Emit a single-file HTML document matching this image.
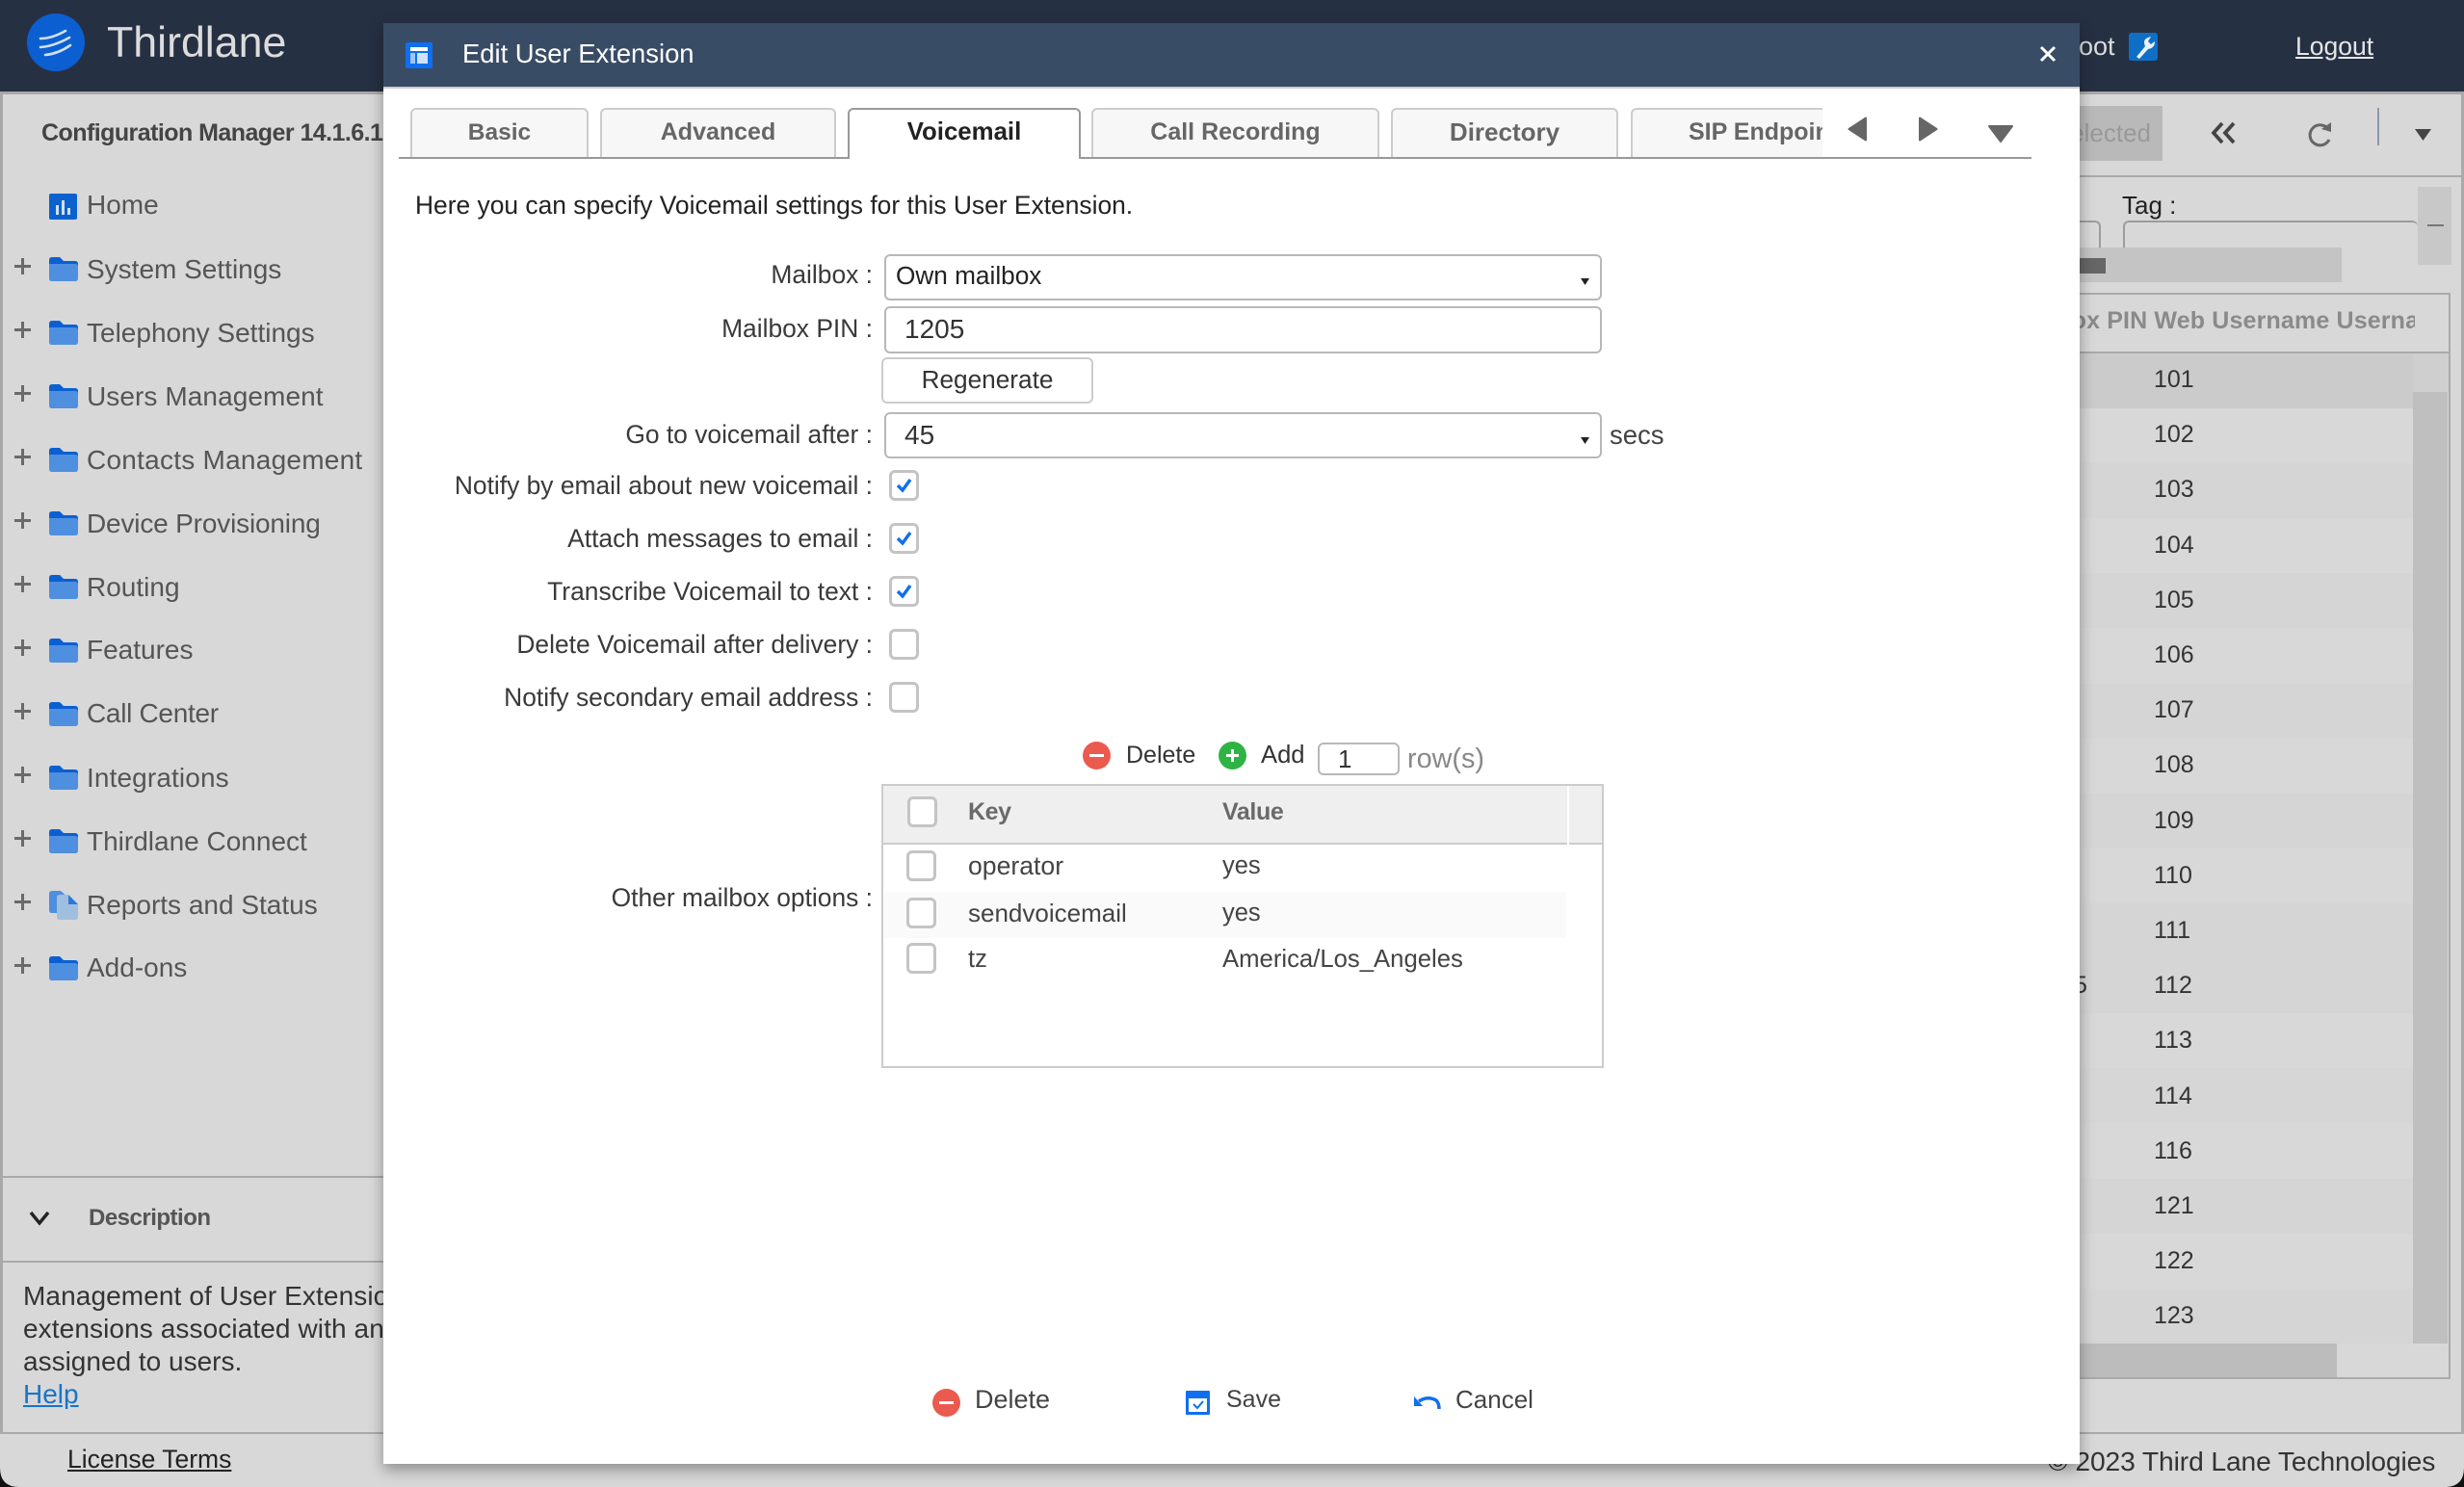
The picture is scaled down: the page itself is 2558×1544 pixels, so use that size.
<!DOCTYPE html>
<html lang="en"><head><meta charset="utf-8"><title>Edit User Extension</title>
<style>
html,body{margin:0;padding:0;width:2558px;height:1544px;overflow:hidden;background:#d8d8d8}
body{position:relative;font-family:"Liberation Sans",sans-serif;color:#333}
.a{position:absolute;display:block}
.t{position:absolute;white-space:nowrap;line-height:40px;height:40px}
.n{font-size:28px;color:#555;left:90px}
.p{left:15px;width:17px;height:3px;background:#6a6a6a}
.p:after{content:"";position:absolute;left:7px;top:-7px;width:3px;height:17px;background:#6a6a6a}
.num{left:2236px;font-size:25px;color:#333}
.lb{right:1652px;font-size:26.4px;color:#3a3a3a;text-align:right}
.tab{position:absolute;top:112px;height:51px;box-sizing:border-box;background:#f7f7f7;border:2px solid #ccc;border-bottom:0;border-radius:6px 6px 0 0;text-align:center;font-size:25px;font-weight:bold;color:#666;line-height:47px;overflow:hidden;white-space:nowrap}
.ip{position:absolute;box-sizing:border-box;background:#fff;border:2px solid #b8b8b8;border-radius:6px}
.cb{position:absolute;box-sizing:border-box;width:31px;height:32px;background:#fff;border:3px solid #c4c4c4;border-radius:6px}
.row{position:absolute;left:2159px;width:346px;height:57px}
</style></head><body>
<!-- header -->
<div class="a" style="left:0;top:0;width:2558px;height:95px;background:#263043"></div>
<div class="a" style="left:0;top:95px;width:2558px;height:3px;background:#a8a8a8"></div>
<svg class="a" style="left:27px;top:14px" width="62" height="60" viewBox="0 0 62 60"><ellipse cx="31" cy="30" rx="30" ry="30" fill="#0b5fd1"/><g fill="none" stroke="#cfe0f6" stroke-width="2.6" stroke-linecap="round"><path d="M15 26Q27 26 41 18"/><path d="M15 35Q29 34 45 25"/><path d="M20 43Q33 42 46 33"/></g></svg>
<div class="t" style="left:111px;top:25px;font-size:44.7px;color:#dcdcdc">Thirdlane</div>
<div class="t" style="left:2159px;top:28px;width:39px;overflow:hidden;font-size:27px;color:#dcdcdc"><span style="margin-left:-1px">oot</span></div>
<svg class="a" style="left:2210px;top:34px" width="30" height="29" viewBox="0 0 30 29"><rect width="30" height="29" rx="3" fill="#0f6fc6"/><path d="M8 25L17 14Q14 7 20 5L23 4L20 9L23 12L27 9Q27 16 20 17L11 27Z" fill="#e8f1fa"/></svg>
<div class="t" style="left:2383px;top:28px;font-size:26.5px;color:#e6e6e6;text-decoration:underline">Logout</div>

<!-- left panel -->
<div class="a" style="left:0;top:98px;width:3px;height:1390px;background:#a8a8a8"></div>
<div class="t" style="left:43px;top:118px;font-size:25px;font-weight:bold;color:#444;letter-spacing:-.55px">Configuration Manager 14.1.6.1</div>
<svg class="a" style="left:51px;top:201px" width="29" height="27" viewBox="0 0 29 27"><rect width="29" height="27" rx="2" fill="#0b62cf"/><path d="M7 12h3v10H7zM13 7h3v15h-3zM19 15h3v7h-3z" fill="#cfe0f6"/></svg>
<div class="t n" style="top:193px">Home</div>

<div class="a p" style="top:275px"></div><svg class="a" style="left:51px;top:267px" width="30" height="25" viewBox="0 0 30 25"><path d="M0 3Q0 0 3 0H11L15 4H27Q30 4 30 7V10H0Z" fill="#0b5fd1"/><path d="M0 7H27Q30 7 30 10V22Q30 25 27 25H3Q0 25 0 22Z" fill="#4f8fdf"/></svg><div class="t n" style="top:260px">System Settings</div>
<div class="a p" style="top:341px"></div><svg class="a" style="left:51px;top:333px" width="30" height="25" viewBox="0 0 30 25"><path d="M0 3Q0 0 3 0H11L15 4H27Q30 4 30 7V10H0Z" fill="#0b5fd1"/><path d="M0 7H27Q30 7 30 10V22Q30 25 27 25H3Q0 25 0 22Z" fill="#4f8fdf"/></svg><div class="t n" style="top:326px">Telephony Settings</div>
<div class="a p" style="top:407px"></div><svg class="a" style="left:51px;top:399px" width="30" height="25" viewBox="0 0 30 25"><path d="M0 3Q0 0 3 0H11L15 4H27Q30 4 30 7V10H0Z" fill="#0b5fd1"/><path d="M0 7H27Q30 7 30 10V22Q30 25 27 25H3Q0 25 0 22Z" fill="#4f8fdf"/></svg><div class="t n" style="top:392px;letter-spacing:.08px">Users Management</div>
<div class="a p" style="top:473px"></div><svg class="a" style="left:51px;top:465px" width="30" height="25" viewBox="0 0 30 25"><path d="M0 3Q0 0 3 0H11L15 4H27Q30 4 30 7V10H0Z" fill="#0b5fd1"/><path d="M0 7H27Q30 7 30 10V22Q30 25 27 25H3Q0 25 0 22Z" fill="#4f8fdf"/></svg><div class="t n" style="top:458px;letter-spacing:.25px">Contacts Management</div>
<div class="a p" style="top:539px"></div><svg class="a" style="left:51px;top:531px" width="30" height="25" viewBox="0 0 30 25"><path d="M0 3Q0 0 3 0H11L15 4H27Q30 4 30 7V10H0Z" fill="#0b5fd1"/><path d="M0 7H27Q30 7 30 10V22Q30 25 27 25H3Q0 25 0 22Z" fill="#4f8fdf"/></svg><div class="t n" style="top:524px;letter-spacing:-.17px">Device Provisioning</div>
<div class="a p" style="top:605px"></div><svg class="a" style="left:51px;top:597px" width="30" height="25" viewBox="0 0 30 25"><path d="M0 3Q0 0 3 0H11L15 4H27Q30 4 30 7V10H0Z" fill="#0b5fd1"/><path d="M0 7H27Q30 7 30 10V22Q30 25 27 25H3Q0 25 0 22Z" fill="#4f8fdf"/></svg><div class="t n" style="top:590px">Routing</div>
<div class="a p" style="top:671px"></div><svg class="a" style="left:51px;top:663px" width="30" height="25" viewBox="0 0 30 25"><path d="M0 3Q0 0 3 0H11L15 4H27Q30 4 30 7V10H0Z" fill="#0b5fd1"/><path d="M0 7H27Q30 7 30 10V22Q30 25 27 25H3Q0 25 0 22Z" fill="#4f8fdf"/></svg><div class="t n" style="top:655px">Features</div>
<div class="a p" style="top:737px"></div><svg class="a" style="left:51px;top:729px" width="30" height="25" viewBox="0 0 30 25"><path d="M0 3Q0 0 3 0H11L15 4H27Q30 4 30 7V10H0Z" fill="#0b5fd1"/><path d="M0 7H27Q30 7 30 10V22Q30 25 27 25H3Q0 25 0 22Z" fill="#4f8fdf"/></svg><div class="t n" style="top:721px;letter-spacing:-.3px">Call Center</div>
<div class="a p" style="top:803px"></div><svg class="a" style="left:51px;top:795px" width="30" height="25" viewBox="0 0 30 25"><path d="M0 3Q0 0 3 0H11L15 4H27Q30 4 30 7V10H0Z" fill="#0b5fd1"/><path d="M0 7H27Q30 7 30 10V22Q30 25 27 25H3Q0 25 0 22Z" fill="#4f8fdf"/></svg><div class="t n" style="top:788px;letter-spacing:.12px">Integrations</div>
<div class="a p" style="top:869px"></div><svg class="a" style="left:51px;top:861px" width="30" height="25" viewBox="0 0 30 25"><path d="M0 3Q0 0 3 0H11L15 4H27Q30 4 30 7V10H0Z" fill="#0b5fd1"/><path d="M0 7H27Q30 7 30 10V22Q30 25 27 25H3Q0 25 0 22Z" fill="#4f8fdf"/></svg><div class="t n" style="top:854px">Thirdlane Connect</div>
<div class="a p" style="top:935px"></div><svg class="a" style="left:50px;top:924px" width="32" height="32" viewBox="0 0 32 32"><path d="M1 4Q1 1 4 1H13L21 8V24H4Q1 24 1 21Z" fill="#4f8fdf"/><path d="M9 8Q9 5 12 5H21L31 15V28Q31 31 28 31H12Q9 31 9 28Z" fill="#a0bfdf"/><path d="M21 5L31 15H21Z" fill="#2b78dc"/></svg><div class="t n" style="top:920px">Reports and Status</div>
<div class="a p" style="top:1001px"></div><svg class="a" style="left:51px;top:993px" width="30" height="25" viewBox="0 0 30 25"><path d="M0 3Q0 0 3 0H11L15 4H27Q30 4 30 7V10H0Z" fill="#0b5fd1"/><path d="M0 7H27Q30 7 30 10V22Q30 25 27 25H3Q0 25 0 22Z" fill="#4f8fdf"/></svg><div class="t n" style="top:985px">Add-ons</div>

<div class="a" style="left:0;top:1221px;width:400px;height:2px;background:#aaa"></div>
<svg class="a" style="left:30px;top:1257px" width="22" height="16" viewBox="0 0 22 16"><path d="M2 2L11 13L20 2" fill="none" stroke="#222" stroke-width="3.4"/></svg>
<div class="t" style="left:92px;top:1245px;font-size:24px;font-weight:bold;color:#555;letter-spacing:-.5px">Description</div>
<div class="a" style="left:0;top:1309px;width:400px;height:2px;background:#aaa"></div>
<div class="t" style="left:24px;top:1326px;font-size:28px;color:#333;letter-spacing:.1px">Management of User Extensions</div>
<div class="t" style="left:24px;top:1360px;font-size:28px;color:#333;letter-spacing:.1px">extensions associated with an</div>
<div class="t" style="left:24px;top:1394px;font-size:28px;color:#333">assigned to users.</div>
<div class="t" style="left:24px;top:1428px;font-size:28px;color:#1a74c8;text-decoration:underline">Help</div>
<div class="a" style="left:0;top:1487px;width:2558px;height:2px;background:#aaa"></div>
<div class="t" style="left:70px;top:1495px;font-size:26.5px;color:#222;text-decoration:underline">License Terms</div>
<div class="t" style="left:2126px;top:1497px;font-size:28.2px;color:#333;letter-spacing:-.1px">© 2023 Third Lane Technologies</div>
<svg class="a" style="left:0;top:1524px" width="20" height="20"><path d="M0 0Q0 20 20 20H0Z" fill="#111"/></svg>
<svg class="a" style="left:2538px;top:1524px" width="20" height="20"><path d="M20 0Q20 20 0 20H20Z" fill="#111"/></svg>

<!-- right side content -->
<div class="a" style="left:2555px;top:98px;width:3px;height:1390px;background:#aaa"></div>
<div class="a" style="left:2100px;top:110px;width:145px;height:57px;background:#b9b9b9"></div>
<div class="t" style="left:2120px;top:118px;font-size:26px;color:#999;width:113px;text-align:right">Selected</div>
<svg class="a" style="left:2295px;top:126px" width="28" height="24" viewBox="0 0 28 24"><path d="M12 2L3 12L12 22M24 2L15 12L24 22" fill="none" stroke="#444" stroke-width="3.8"/></svg>
<svg class="a" style="left:2396px;top:124px" width="26" height="30" viewBox="0 0 26 30"><path d="M21 10A10.5 10.5 0 1 0 22 21" fill="none" stroke="#666" stroke-width="3"/><path d="M14 10L24 3V13Z" fill="#666"/></svg>
<div class="a" style="left:2468px;top:112px;width:2px;height:39px;background:#8d97a8"></div>
<svg class="a" style="left:2507px;top:133px" width="17" height="13"><path d="M0 1H17L8.500 13Z" fill="#444"/></svg>
<div class="a" style="left:2100px;top:182px;width:458px;height:2px;background:#aaa"></div>
<div class="t" style="left:2203px;top:193px;font-size:26px;color:#222">Tag :</div>
<div class="a" style="left:2100px;top:229px;width:81px;height:28px;box-sizing:border-box;border:2px solid #9c9c9c;border-bottom:0;border-radius:6px 6px 0 0"></div>
<div class="a" style="left:2204px;top:229px;width:306px;height:28px;box-sizing:border-box;border:2px solid #9c9c9c;border-bottom:0;border-right:0;border-radius:6px 6px 0 0"></div>
<div class="a" style="left:2510px;top:194px;width:35px;height:81px;background:#c8c8c8"></div>
<div class="a" style="left:2520px;top:233px;width:17px;height:2px;background:#777"></div>
<div class="a" style="left:2100px;top:257px;width:331px;height:36px;background:#c4c4c4"></div>
<div class="a" style="left:2100px;top:268px;width:86px;height:16px;background:#666"></div>

<div class="a" style="left:2100px;top:304px;width:444px;height:2px;background:#aaa"></div>
<div class="a" style="left:2542px;top:304px;width:2px;height:1128px;background:#aaa"></div>
<div class="a" style="left:2100px;top:365px;width:442px;height:2px;background:#aaa"></div>
<div class="t" style="left:2086px;top:313px;width:421px;overflow:hidden;font-size:25px;font-weight:bold;color:#8a8a8a;letter-spacing:.15px">Mailbox PIN Web Username Username</div>

<div class="row" style="top:367px;background:#cbcbcb"></div>
<div class="row" style="top:481px;background:#d5d5d5"></div>
<div class="row" style="top:595px;background:#d5d5d5"></div>
<div class="row" style="top:710px;background:#d5d5d5"></div>
<div class="row" style="top:824px;background:#d5d5d5"></div>
<div class="row" style="top:938px;background:#d5d5d5"></div>
<div class="row" style="top:995px;background:#d5d5d5"></div>
<div class="row" style="top:1109px;background:#d6d6d6"></div>
<div class="row" style="top:1224px;background:#d5d5d5"></div>
<div class="row" style="top:1338px;background:#d5d5d5"></div>
<div class="t num" style="top:374px">101</div>
<div class="t num" style="top:431px">102</div>
<div class="t num" style="top:488px">103</div>
<div class="t num" style="top:546px">104</div>
<div class="t num" style="top:603px">105</div>
<div class="t num" style="top:660px">106</div>
<div class="t num" style="top:717px">107</div>
<div class="t num" style="top:774px">108</div>
<div class="t num" style="top:832px">109</div>
<div class="t num" style="top:889px">110</div>
<div class="t num" style="top:946px">111</div>
<div class="t num" style="top:1003px">112</div>
<div class="t num" style="top:1060px">113</div>
<div class="t num" style="top:1118px">114</div>
<div class="t num" style="top:1175px">116</div>
<div class="t num" style="top:1232px">121</div>
<div class="t num" style="top:1289px">122</div>
<div class="t num" style="top:1346px">123</div>
<div class="t" style="left:2153px;top:1003px;font-size:25px;color:#333">5</div>
<div class="a" style="left:2505px;top:367px;width:37px;height:40px;background:#cfcfcf"></div>
<div class="a" style="left:2505px;top:407px;width:36px;height:988px;background:#bfbfbf"></div>
<div class="a" style="left:2100px;top:1395px;width:326px;height:35px;background:#bcbcbc"></div>
<div class="a" style="left:2100px;top:1430px;width:444px;height:2px;background:#aaa"></div>

<!-- modal -->
<div class="a" style="left:398px;top:24px;width:1761px;height:1496px;background:#fff;box-shadow:0 6px 14px rgba(0,0,0,.35)"></div>
<div class="a" style="left:398px;top:24px;width:1761px;height:66px;background:#394c66"></div>
<div class="a" style="left:398px;top:90px;width:1761px;height:2px;background:#ccc"></div>
<svg class="a" style="left:421px;top:44px" width="28" height="27" viewBox="0 0 28 27"><rect width="28" height="27" rx="2" fill="#0f6ff0"/><rect x="5" y="5" width="18" height="4" fill="#fff"/><rect x="5" y="11" width="5" height="11" fill="#9fc4f7"/><rect x="12" y="11" width="11" height="11" fill="#cfe2fb"/></svg>
<div class="t" style="left:480px;top:36px;font-size:27.4px;color:#fff">Edit User Extension</div>
<svg class="a" style="left:2117px;top:47px" width="18" height="18"><path d="M2 2L16 16M16 2L2 16" stroke="#fff" stroke-width="3" fill="none"/></svg>

<div class="tab" style="left:426px;width:185px;font-size:24.5px">Basic</div>
<div class="tab" style="left:623px;width:245px">Advanced</div>
<div class="a" style="left:414px;top:163px;width:1695px;height:2px;background:#999"></div>
<div class="tab" style="left:880px;width:242px;height:53px;background:#fff;border-color:#999;color:#222;font-size:25.8px">Voicemail</div>
<div class="tab" style="left:1133px;width:299px">Call Recording</div>
<div class="tab" style="left:1444px;width:236px;font-size:26px">Directory</div>
<div class="tab" style="left:1693px;width:199px;border-right:0;border-radius:6px 0 0 0;text-align:left;padding-left:58px">SIP Endpoint</div>
<svg class="a" style="left:1918px;top:120px" width="22" height="28"><path d="M1.500 14L19 2.500V25.500Z" fill="#666" stroke="#666" stroke-width="2" stroke-linejoin="round"/></svg>
<svg class="a" style="left:1990px;top:120px" width="22" height="28"><path d="M20.500 14L3 2.500V25.500Z" fill="#666" stroke="#666" stroke-width="2" stroke-linejoin="round"/></svg>
<svg class="a" style="left:2063px;top:129px" width="28" height="20"><path d="M2 2H26L14 18Z" fill="#666" stroke="#666" stroke-width="2" stroke-linejoin="round"/></svg>

<div class="t" style="left:431px;top:193px;font-size:26.4px;color:#222">Here you can specify Voicemail settings for this User Extension.</div>

<div class="t lb" style="top:265px">Mailbox :</div>
<div class="ip" style="left:918px;top:264px;width:745px;height:48px"></div>
<div class="t" style="left:930px;top:266px;font-size:26.2px;color:#222">Own mailbox</div>
<svg class="a" style="left:1641px;top:289px" width="9" height="7"><path d="M0 0H9L4.500 7Z" fill="#222"/></svg>
<div class="t lb" style="top:321px">Mailbox PIN :</div>
<div class="ip" style="left:918px;top:318px;width:745px;height:49px"></div>
<div class="t" style="left:939px;top:322px;font-size:28px;color:#333">1205</div>
<div class="ip" style="left:915px;top:371px;width:220px;height:48px;border-color:#ccc;text-align:center;font-size:26.2px;line-height:42px;color:#333">Regenerate</div>
<div class="t lb" style="top:431px">Go to voicemail after :</div>
<div class="ip" style="left:918px;top:428px;width:745px;height:48px"></div>
<div class="t" style="left:939px;top:432px;font-size:28px;color:#333">45</div>
<svg class="a" style="left:1641px;top:454px" width="9" height="7"><path d="M0 0H9L4.500 7Z" fill="#222"/></svg>
<div class="t" style="left:1671px;top:432px;font-size:27.5px;color:#444">secs</div>

<div class="t lb" style="top:484px">Notify by email about new voicemail :</div>
<div class="cb" style="left:923px;top:488px"></div><svg class="a" style="left:930px;top:496px" width="17" height="16"><path d="M2 8L7 13L15 2" fill="none" stroke="#0f6ff0" stroke-width="3.4"/></svg>
<div class="t lb" style="top:539px">Attach messages to email :</div>
<div class="cb" style="left:923px;top:543px"></div><svg class="a" style="left:930px;top:551px" width="17" height="16"><path d="M2 8L7 13L15 2" fill="none" stroke="#0f6ff0" stroke-width="3.4"/></svg>
<div class="t lb" style="top:594px">Transcribe Voicemail to text :</div>
<div class="cb" style="left:923px;top:598px"></div><svg class="a" style="left:930px;top:606px" width="17" height="16"><path d="M2 8L7 13L15 2" fill="none" stroke="#0f6ff0" stroke-width="3.4"/></svg>
<div class="t lb" style="top:649px">Delete Voicemail after delivery :</div>
<div class="cb" style="left:923px;top:653px"></div>
<div class="t lb" style="top:704px">Notify secondary email address :</div>
<div class="cb" style="left:923px;top:708px"></div>

<svg class="a" style="left:1124px;top:770px" width="29" height="29"><circle cx="14.500" cy="14.500" r="14.500" fill="#eb5a4e"/><rect x="7" y="13" width="15" height="3" fill="#fff"/></svg>
<div class="t" style="left:1169px;top:764px;font-size:25px;color:#333">Delete</div>
<svg class="a" style="left:1265px;top:770px" width="29" height="29"><circle cx="14.500" cy="14.500" r="14.500" fill="#2fb344"/><rect x="8" y="13" width="13" height="3" fill="#fff"/><rect x="13" y="8" width="3" height="13" fill="#fff"/></svg>
<div class="t" style="left:1309px;top:764px;font-size:25.6px;color:#333">Add</div>
<div class="ip" style="left:1368px;top:771px;width:85px;height:34px"></div>
<div class="t" style="left:1389px;top:768px;font-size:26px;color:#333">1</div>
<div class="t" style="left:1461px;top:768px;font-size:28.8px;color:#888">row(s)</div>

<div class="t lb" style="top:912px">Other mailbox options :</div>
<div class="a" style="left:915px;top:814px;width:750px;height:295px;box-sizing:border-box;border:2px solid #ccc"></div>
<div class="a" style="left:917px;top:816px;width:746px;height:59px;background:#efefef"></div>
<div class="a" style="left:917px;top:875px;width:746px;height:2px;background:#ccc"></div>
<div class="a" style="left:1627px;top:816px;width:2px;height:61px;background:#fff"></div>
<div class="cb" style="left:942px;top:827px"></div>
<div class="t" style="left:1005px;top:823px;font-size:25px;font-weight:bold;color:#6a6a6a;letter-spacing:-.4px">Key</div>
<div class="t" style="left:1269px;top:823px;font-size:25px;font-weight:bold;color:#6a6a6a;letter-spacing:-.4px">Value</div>
<div class="a" style="left:918px;top:926px;width:708px;height:48px;background:#fafafa"></div>
<div class="cb" style="left:941px;top:883px"></div>
<div class="t" style="left:1005px;top:879px;font-size:26.6px;color:#444">operator</div>
<div class="t" style="left:1269px;top:879px;font-size:25.5px;color:#444">yes</div>
<div class="cb" style="left:941px;top:932px"></div>
<div class="t" style="left:1005px;top:928px;font-size:26px;color:#444">sendvoicemail</div>
<div class="t" style="left:1269px;top:928px;font-size:25.5px;color:#444">yes</div>
<div class="cb" style="left:941px;top:979px"></div>
<div class="t" style="left:1005px;top:976px;font-size:25.5px;color:#444">tz</div>
<div class="t" style="left:1269px;top:976px;font-size:25.7px;color:#444">America/Los_Angeles</div>

<svg class="a" style="left:968px;top:1442px" width="29" height="29"><circle cx="14.500" cy="14.500" r="14.500" fill="#eb5a4e"/><rect x="7" y="13" width="15" height="3" fill="#fff"/></svg>
<div class="t" style="left:1012px;top:1433px;font-size:27px;color:#444">Delete</div>
<svg class="a" style="left:1231px;top:1444px" width="25" height="25" viewBox="0 0 25 25"><path d="M0 1Q0 0 1 0H24Q25 0 25 1V24Q25 25 24 25H1Q0 25 0 24Z" fill="#0f6ff0"/><rect x="3" y="8" width="19" height="14" fill="#fff"/><path d="M8 14L12 18L18 11" fill="none" stroke="#0f6ff0" stroke-width="2"/></svg>
<div class="t" style="left:1273px;top:1433px;font-size:25px;color:#444">Save</div>
<svg class="a" style="left:1467px;top:1449px" width="29" height="15" viewBox="0 0 29 15"><path d="M6 6Q15 0 24 5Q27 8 27 14" fill="none" stroke="#0f6ff0" stroke-width="3.5"/><path d="M1 1L10 11H1Z" fill="#0f6ff0"/></svg>
<div class="t" style="left:1511px;top:1433px;font-size:26px;color:#444">Cancel</div>
</body></html>
